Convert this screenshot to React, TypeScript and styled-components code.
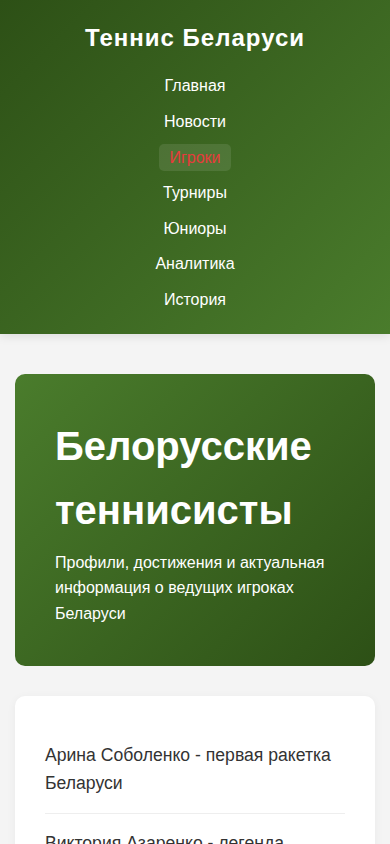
import React from "react"
import styled, { createGlobalStyle } from "styled-components"

const GlobalStyle = createGlobalStyle`
  * {
    box-sizing: border-box;
  }
  body {
    margin: 0;
    background: #f4f4f4;
    color: #333;
    font-family: "Liberation Sans", Arial, sans-serif;
    line-height: 1.6;
  }
`

const Header = styled.header`
  background: linear-gradient(135deg, #2d5016, #4a7c2c);
  color: #fff;
  padding: 19px 20px 21px;
  box-shadow: 0 2px 10px rgba(0, 0, 0, 0.1);
  text-align: center;
`

const Logo = styled.h1`
  margin: 0 0 16px;
  font-size: 24px;
  font-weight: 700;
  letter-spacing: 1px;
`

const NavList = styled.ul`
  list-style: none;
  margin: 0;
  padding: 0;
  display: flex;
  flex-direction: column;
  align-items: center;
  gap: 10px;
`

const NavLink = styled.a<{ $active?: boolean }>`
  color: ${props => (props.$active ? "#e63b3b" : "#fff")};
  background: ${props => (props.$active ? "rgba(255, 255, 255, 0.1)" : "transparent")};
  text-decoration: none;
  font-size: 16px;
  padding: 5px 10px;
  border-radius: 5px;
`

const Main = styled.main`
  padding: 40px 15px;
  display: flex;
  flex-direction: column;
  gap: 30px;
`

const Hero = styled.section`
  background: linear-gradient(135deg, #4a7c2c, #2d5016);
  color: #fff;
  border-radius: 10px;
  padding: 40px;
`

const HeroTitle = styled.h2`
  margin: 0 0 8px;
  font-size: 40px;
  font-weight: 700;
`

const HeroText = styled.p`
  margin: 0;
  font-size: 16px;
`

const Card = styled.section`
  background: #fff;
  border-radius: 10px;
  padding: 30px;
  box-shadow: 0 2px 10px rgba(0, 0, 0, 0.05);
`

const List = styled.ul`
  list-style: none;
  margin: 0;
  padding: 0;
`

const Item = styled.li`
  font-size: 17.6px;
  padding: 15px 0;
  border-bottom: 1px solid #eee;
  &:last-child {
    border-bottom: none;
  }
`

const links = ["Главная", "Новости", "Игроки", "Турниры", "Юниоры", "Аналитика", "История"]

const players = [
  "Арина Соболенко - первая ракетка Беларуси",
  "Виктория Азаренко - легенда белорусского тенниса",
  "Александра Саснович - опытный игрок",
  "Илья Ивашко - лидер мужского тенниса",
]

export default function App() {
  return (
    <>
      <GlobalStyle />
      <Header>
        <Logo>Теннис Беларуси</Logo>
        <nav>
          <NavList>
            {links.map(l => (
              <li key={l}>
                <NavLink href="#" $active={l === "Игроки"}>
                  {l}
                </NavLink>
              </li>
            ))}
          </NavList>
        </nav>
      </Header>
      <Main>
        <Hero>
          <HeroTitle>Белорусские теннисисты</HeroTitle>
          <HeroText>
            Профили, достижения и актуальная информация о ведущих игроках
            Беларуси
          </HeroText>
        </Hero>
        <Card>
          <List>
            {players.map(p => (
              <Item key={p}>{p}</Item>
            ))}
          </List>
        </Card>
      </Main>
    </>
  )
}
